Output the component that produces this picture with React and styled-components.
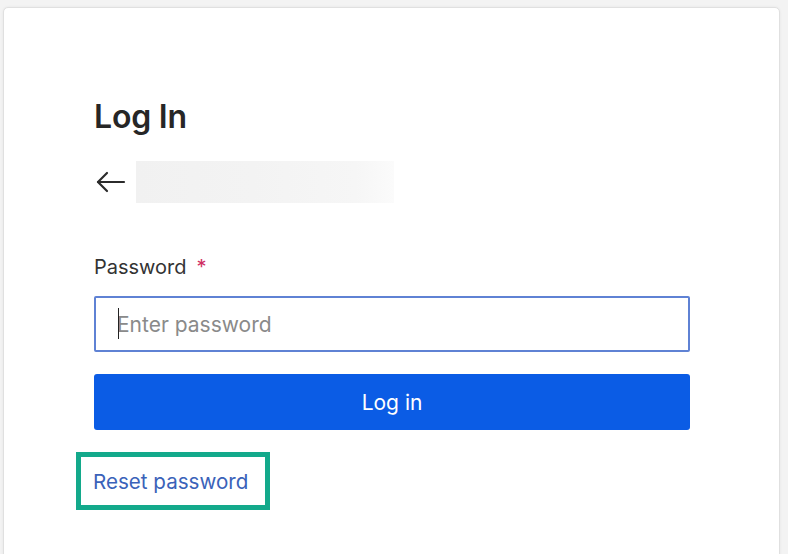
import React from "react";
import styled, { createGlobalStyle } from "styled-components";

const Global = createGlobalStyle`
  html, body { margin: 0; padding: 0; background: #f3f3f3; }
  body { font-family: Inter, "Noto Sans", Arial, sans-serif; overflow: hidden; }
  * { box-sizing: border-box; }
`;

const Page = styled.div`
  padding: 7px 8px 0 3px;
  height: 554px;
  overflow: hidden;
`;

const Card = styled.div`
  background: #fff;
  border: 1px solid #e0e0e0;
  border-radius: 5px;
  box-shadow: 0 0 3px rgba(0, 0, 0, 0.06);
  height: 600px;
  padding: 89px 0 0 90px;
`;

const Content = styled.div`
  width: 596px;
  display: flex;
  flex-direction: column;
  align-items: stretch;
`;

const Title = styled.h1`
  margin: 0;
  font-size: 32px;
  line-height: 40px;
  font-weight: 600;
  color: #262626;
  letter-spacing: -0.2px;
`;

const BackRow = styled.div`
  margin-top: 24px;
  display: flex;
  align-items: center;
  gap: 10px;
  height: 42px;
`;

const BackIcon = styled.svg`
  width: 30px;
  height: 22px;
  margin-left: 2px;
  flex: none;
`;

const Blurred = styled.div`
  width: 258px;
  height: 42px;
  background: linear-gradient(90deg, #f1f1f1 0%, #f3f3f3 45%, #f6f6f6 85%, #fbfbfb 100%);
`;

const Label = styled.label`
  margin-top: 50px;
  font-size: 20px;
  line-height: 28px;
  color: #333;
  display: flex;
  gap: 10px;
`;

const Required = styled.span`
  color: #cf2e61;
`;

const InputBox = styled.div`
  margin-top: 15px;
  height: 56px;
  border: 2px solid #5f82d4;
  border-radius: 2px;
  display: flex;
  align-items: center;
  padding-left: 21px;
  position: relative;
`;

const Caret = styled.span`
  position: absolute;
  left: 22px;
  top: 10px;
  width: 1px;
  height: 31px;
  background: #222;
`;

const Input = styled.input`
  border: none;
  outline: none;
  width: 100%;
  font-family: inherit;
  font-size: 21px;
  color: #222;
  background: transparent;
  padding: 0;
  &::placeholder { color: #8a8a8a; }
`;

const Button = styled.button`
  margin-top: 22px;
  height: 56px;
  border: none;
  border-radius: 3px;
  background: #0b5ce5;
  color: #fff;
  font-family: inherit;
  font-size: 21px;
  cursor: pointer;
`;

const LinkRow = styled.div`
  margin-top: 22px;
  display: flex;
`;

const Highlight = styled.div`
  margin-left: -18px;
  width: 194px;
  height: 58px;
  border: 5px solid #13a98b;
  display: flex;
  align-items: center;
  padding-left: 12px;
`;

const ResetLink = styled.a`
  font-size: 20.6px;
  color: #3a62b9;
  text-decoration: none;
`;

export default function App() {
  return (
    <>
      <Global />
      <Page>
        <Card>
          <Content>
            <Title>Log In</Title>
            <BackRow>
              <BackIcon viewBox="0 0 30 22" fill="none" stroke="#2b2b2b" strokeWidth="2.2" strokeLinecap="round" strokeLinejoin="round">
                <path d="M28 11H2" />
                <path d="M11 2L2 11l9 9" />
              </BackIcon>
              <Blurred />
            </BackRow>
            <Label>
              Password <Required>*</Required>
            </Label>
            <InputBox>
              <Caret />
              <Input type="password" placeholder="Enter password" />
            </InputBox>
            <Button>Log in</Button>
            <LinkRow>
              <Highlight>
                <ResetLink href="#">Reset password</ResetLink>
              </Highlight>
            </LinkRow>
          </Content>
        </Card>
      </Page>
    </>
  );
}
